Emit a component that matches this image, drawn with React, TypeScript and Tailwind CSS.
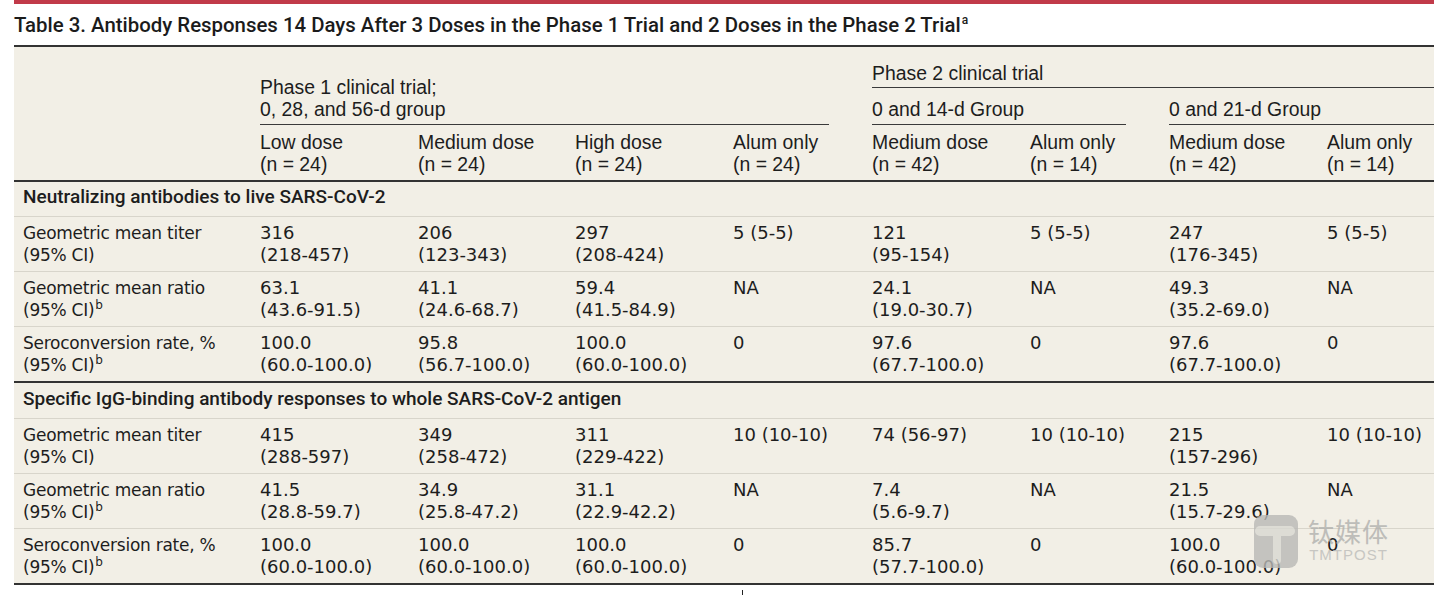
import React from "react";

const headFont = "font-['Liberation_Sans',Arial,sans-serif]";
const medFont = "font-['Roboto','Liberation_Sans',sans-serif] font-medium";
const bodyFont = "font-['DejaVu_Sans',sans-serif]";

type Item = { label: string[]; sup: boolean; cells: string[][] };

const sections: { title: string; items: Item[] }[] = [
  {
    title: "Neutralizing antibodies to live SARS-CoV-2",
    items: [
      {
        label: ["Geometric mean titer", "(95% CI)"],
        sup: false,
        cells: [
          ["316", "(218-457)"],
          ["206", "(123-343)"],
          ["297", "(208-424)"],
          ["5 (5-5)"],
          ["121", "(95-154)"],
          ["5 (5-5)"],
          ["247", "(176-345)"],
          ["5 (5-5)"],
        ],
      },
      {
        label: ["Geometric mean ratio", "(95% CI)"],
        sup: true,
        cells: [
          ["63.1", "(43.6-91.5)"],
          ["41.1", "(24.6-68.7)"],
          ["59.4", "(41.5-84.9)"],
          ["NA"],
          ["24.1", "(19.0-30.7)"],
          ["NA"],
          ["49.3", "(35.2-69.0)"],
          ["NA"],
        ],
      },
      {
        label: ["Seroconversion rate, %", "(95% CI)"],
        sup: true,
        cells: [
          ["100.0", "(60.0-100.0)"],
          ["95.8", "(56.7-100.0)"],
          ["100.0", "(60.0-100.0)"],
          ["0"],
          ["97.6", "(67.7-100.0)"],
          ["0"],
          ["97.6", "(67.7-100.0)"],
          ["0"],
        ],
      },
    ],
  },
  {
    title: "Specific IgG-binding antibody responses to whole SARS-CoV-2 antigen",
    items: [
      {
        label: ["Geometric mean titer", "(95% CI)"],
        sup: false,
        cells: [
          ["415", "(288-597)"],
          ["349", "(258-472)"],
          ["311", "(229-422)"],
          ["10 (10-10)"],
          ["74 (56-97)"],
          ["10 (10-10)"],
          ["215", "(157-296)"],
          ["10 (10-10)"],
        ],
      },
      {
        label: ["Geometric mean ratio", "(95% CI)"],
        sup: true,
        cells: [
          ["41.5", "(28.8-59.7)"],
          ["34.9", "(25.8-47.2)"],
          ["31.1", "(22.9-42.2)"],
          ["NA"],
          ["7.4", "(5.6-9.7)"],
          ["NA"],
          ["21.5", "(15.7-29.6)"],
          ["NA"],
        ],
      },
      {
        label: ["Seroconversion rate, %", "(95% CI)"],
        sup: true,
        cells: [
          ["100.0", "(60.0-100.0)"],
          ["100.0", "(60.0-100.0)"],
          ["100.0", "(60.0-100.0)"],
          ["0"],
          ["85.7", "(57.7-100.0)"],
          ["0"],
          ["100.0", "(60.0-100.0)"],
          ["0"],
        ],
      },
    ],
  },
];

const doseHeads = [
  ["Low dose", "(n = 24)"],
  ["Medium dose", "(n = 24)"],
  ["High dose", "(n = 24)"],
  ["Alum only", "(n = 24)"],
  ["Medium dose", "(n = 42)"],
  ["Alum only", "(n = 14)"],
  ["Medium dose", "(n = 42)"],
  ["Alum only", "(n = 14)"],
];

const widths = [246, 158, 157, 158, 139, 158, 139, 158, 107];

const Watermark = () => (
  <div className="absolute left-[1252px] top-[514px] flex items-start gap-[8px] opacity-80 pointer-events-none">
    <svg width="48" height="55" viewBox="0 0 48 55">
      <rect x="2" y="1" width="44" height="53" rx="9" fill="#b9b9b6" />
      <path d="M8 12 h30 a5 5 0 0 1 0 10 h-9 v24 a4 4 0 0 1 -8 0 v-24 h-13 a5 5 0 0 1 0 -10 z" fill="#d9d8d2" />
    </svg>
    <div className="flex flex-col items-center pt-[2px]">
      <span className="font-['Noto_Sans_CJK_SC',sans-serif] text-[26px] leading-[30px] text-[#b1b1ae] tracking-[1px]">
        钛媒体
      </span>
      <span className="font-['Liberation_Sans',sans-serif] text-[15px] leading-[18px] text-[#bdbdba] tracking-[1px]">
        TMTPOST
      </span>
    </div>
  </div>
);

export default function App() {
  return (
    <div className="relative bg-white w-[1440px] h-[595px] overflow-hidden px-[14px]">
      <div className="h-[4px] w-[1420px] bg-[#c13a49]" />
      <h1 className={`${medFont} mt-[7px] mb-[6px] text-[20.4px] leading-[28px] text-[#1b1b1b] whitespace-nowrap`}>
        Table 3. Antibody Responses 14 Days After 3 Doses in the Phase 1 Trial and 2 Doses in the Phase 2 Trial
        <sup className="text-[12px] align-super top-0 ml-[1px]">a</sup>
      </h1>
      <table className="table-fixed border-collapse w-[1420px] bg-[#f2efe6] border-t-2 border-[#333]">
        <colgroup>
          {widths.map((w, i) => (
            <col key={i} style={{ width: w }} />
          ))}
        </colgroup>
        <thead className={`${headFont} text-[19.4px] leading-[22px] text-[#1d1d1d] font-normal`}>
          <tr>
            <th rowSpan={3} className="border-b-2 border-[#333]" />
            <th colSpan={4} rowSpan={2} className="align-bottom text-left font-normal p-0">
              <div className="mr-[43px] border-b border-[#3a3a3a] pb-[4px]">
                Phase 1 clinical trial;
                <br />
                0, 28, and 56-d group
              </div>
            </th>
            <th colSpan={4} className="text-left font-normal p-0 pt-[15px]">
              <div className="border-b border-[#3a3a3a] pb-[3px]">Phase 2 clinical trial</div>
            </th>
          </tr>
          <tr>
            <th colSpan={2} className="text-left font-normal p-0 pt-[10px]">
              <div className="mr-[43px] border-b border-[#3a3a3a] pb-[4px]">0 and 14-d Group</div>
            </th>
            <th colSpan={2} className="text-left font-normal p-0 pt-[10px]">
              <div className="border-b border-[#3a3a3a] pb-[4px]">0 and 21-d Group</div>
            </th>
          </tr>
          <tr>
            {doseHeads.map((h, i) => (
              <th
                key={i}
                className="text-left font-normal p-0 pt-[6px] pb-[5px] align-top border-b-2 border-[#333]"
              >
                {h[0]}
                <br />
                {h[1]}
              </th>
            ))}
          </tr>
        </thead>
        <tbody className={`${bodyFont} text-[18px] leading-[22px] text-[#1d1d1d]`}>
          {sections.map((s, si) => (
            <React.Fragment key={s.title}>
              <tr>
                <td
                  colSpan={9}
                  className={`${medFont} text-[19px] leading-[22px] pl-[9px] ${si === 0 ? "pt-[4px]" : "pt-[5px]"} pb-[8px] border-b border-[#d8d5cb]`}
                >
                  {s.title}
                </td>
              </tr>
              {s.items.map((it, ri) => {
                const last = ri === s.items.length - 1;
                const border = last ? "border-b-2 border-[#333]" : "border-b border-[#d8d5cb]";
                return (
                  <tr key={ri}>
                    <td className={`pl-[9px] pt-[5px] pb-[5px] align-top text-[17px] tracking-[-0.25px] ${border}`}>
                      {it.label[0]}
                      <br />
                      {it.label[1]}
                      {it.sup && <sup className="text-[12px] align-super top-0 ml-[1px]">b</sup>}
                    </td>
                    {it.cells.map((c, ci) => (
                      <td key={ci} className={`p-0 pt-[5px] pb-[5px] align-top whitespace-nowrap ${border}`}>
                        {c[0]}
                        {c[1] && (
                          <>
                            <br />
                            {c[1]}
                          </>
                        )}
                      </td>
                    ))}
                  </tr>
                );
              })}
            </React.Fragment>
          ))}
        </tbody>
      </table>
      <div className="ml-[728px] mt-[5px] w-px h-[6px] bg-[#222]" />
      <Watermark />
    </div>
  );
}
